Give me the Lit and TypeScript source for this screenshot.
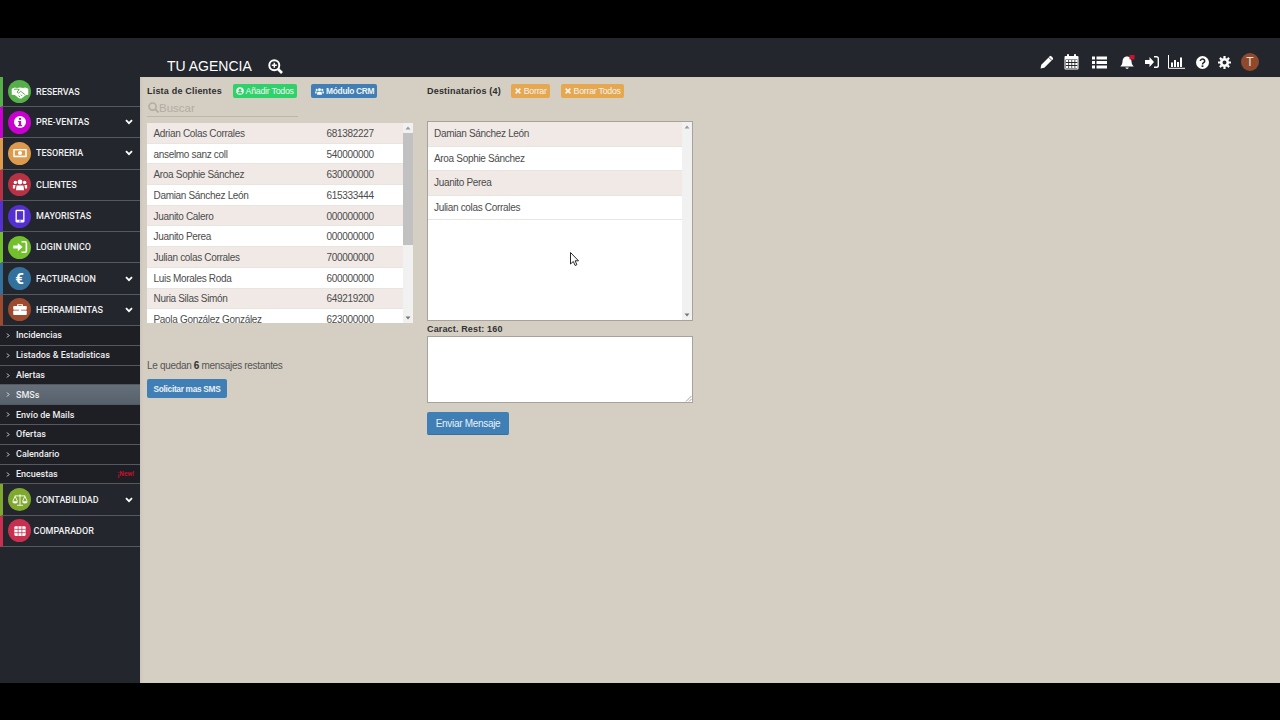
import { LitElement, html, css, svg } from "lit";
import { customElement } from "lit/decorators.js";

const icons: Record<string, unknown> = {
  handshake: svg`<path d="M1 7.500l4-1.500 3 .8L12 6l4 .8L19 6l4 1.500v8L20 16l-6 4.500h-3L5 16l-4-.5z" fill="#fff"/><path d="M4 8.500l4-.5 3 1-3 3 2 1.500 3-2.500 5.500 4.500M10 17l2 1.500M13 15.500l2 2" stroke="#55b04a" stroke-width="1.300" fill="none"/>`,
  info: svg`<circle cx="12" cy="12" r="8" fill="#fff"/><rect x="10.6" y="6.5" width="2.8" height="2.6" fill="#c800d0"/><path d="M9.5 10.5h4V16h1.2v1.6H9.4V16h1.2v-3.8H9.5z" fill="#c800d0"/>`,
  money: svg`<rect x="3" y="6.5" width="18" height="11" rx="1" fill="#fff"/><rect x="5" y="8.5" width="14" height="7" fill="#dd9a4c"/><circle cx="12" cy="12" r="2.8" fill="#fff"/>`,
  users: svg`<circle cx="12" cy="8" r="3.2" fill="#fff"/><circle cx="5.8" cy="8.5" r="2.3" fill="#fff"/><circle cx="18.2" cy="8.5" r="2.3" fill="#fff"/><path d="M7.5 12.5h9l1 6.5h-11z" fill="#fff"/><path d="M2.5 12h3.5l-.7 4.5H2.5zM18 12h3.5v4.5h-2.8z" fill="#fff"/>`,
  tablet: svg`<rect x="6" y="3.5" width="12" height="17" rx="1.5" fill="#fff"/><rect x="7.8" y="5.5" width="8.4" height="11.5" fill="#5530d0"/><circle cx="12" cy="18.8" r="1" fill="#5530d0"/>`,
  signin: svg`<path d="M3 10h6V6.5l6.5 5.5L9 17.5V14H3z" fill="#fff"/><path d="M14 5h4.5A2 2 0 0 1 20.500 7v10a2 2 0 0 1-2 2H14" fill="none" stroke="#fff" stroke-width="2.200"/>`,
  euro: svg``,
  briefcase: svg`<path d="M9 6.500V5h6v1.500" fill="none" stroke="#fff" stroke-width="1.600"/><rect x="3" y="6.500" width="18" height="5" rx="1" fill="#fff"/><rect x="3" y="12.500" width="18" height="6" rx="1" fill="#fff"/><rect x="10.500" y="11" width="3" height="2.500" fill="#fff"/>`,
  balance: svg`<path d="M12 4.500v14M8 19h8M5 6.500h14M5.500 7l-3 6.500M5.500 7l3 6.500M18.500 7l-3 6.500M18.500 7l3 6.500" stroke="#fff" stroke-width="1.200" fill="none"/><path d="M2 13.500h7a3.500 3 0 0 1-7 0zM15 13.500h7a3.500 3 0 0 1-7 0z" fill="#fff"/>`,
  grid: svg`<rect x="4.500" y="5.500" width="15" height="13" rx="1.500" fill="#fff"/><path d="M9.500 5.500v13M14.500 5.500v13M4.500 9.800h15M4.500 14.200h15" stroke="#c9304f" stroke-width="1"/>`,
};

interface MainItem { label: string; color: string; icon: string; chev?: boolean; }
const mainA: MainItem[] = [
  { label: "RESERVAS", color: "#55b04a", icon: "handshake" },
  { label: "PRE-VENTAS", color: "#c800d0", icon: "info", chev: true },
  { label: "TESORERIA", color: "#dd9a4c", icon: "money", chev: true },
  { label: "CLIENTES", color: "#b83246", icon: "users" },
  { label: "MAYORISTAS", color: "#5530d0", icon: "tablet" },
  { label: "LOGIN UNICO", color: "#72c02c", icon: "signin" },
  { label: "FACTURACION", color: "#33709c", icon: "euro", chev: true },
  { label: "HERRAMIENTAS", color: "#9c4b2e", icon: "briefcase", chev: true },
];
const mainB: MainItem[] = [
  { label: "CONTABILIDAD", color: "#7fa82e", icon: "balance", chev: true },
  { label: "COMPARADOR", color: "#c9304f", icon: "grid" },
];
const subs = ["Incidencias", "Listados & Estadísticas", "Alertas", "SMSs", "Envío de Mails", "Ofertas", "Calendario", "Encuestas"];
const clients = [
  ["Adrian Colas Corrales", "681382227"],
  ["anselmo sanz coll", "540000000"],
  ["Aroa Sophie Sánchez", "630000000"],
  ["Damian Sánchez León", "615333444"],
  ["Juanito Calero", "000000000"],
  ["Juanito Perea", "000000000"],
  ["Julian colas Corrales", "700000000"],
  ["Luis Morales Roda", "600000000"],
  ["Nuria Silas Simón", "649219200"],
  ["Paola González González", "623000000"],
];
const dest = ["Damian Sánchez León", "Aroa Sophie Sánchez", "Juanito Perea", "Julian colas Corrales"];

const up = html`<svg class="arrow" viewBox="0 0 10 10"><path d="M2.500 6.500L5 3.500l2.500 3z" fill="#9a9a9a"/></svg>`;
const down = html`<svg class="arrow" viewBox="0 0 10 10"><path d="M2.500 3.500L5 6.500l2.500-3z" fill="#777"/></svg>`;

@customElement("app-root")
export class AppRoot extends LitElement {
  static styles = css`
    :host { display: block; width: 1280px; height: 720px; background: #000; overflow: hidden; position: relative;
      font-family: "Liberation Sans", Arial, sans-serif; color: #3a3a3a; }
    .shell { display: flex; flex-direction: column; height: 720px; padding: 38px 0 37px; box-sizing: border-box; }
    header { height: 39px; flex: none; background: #23262d; display: flex; align-items: flex-end; color: #fff; }
    .brand { margin-left: 167px; font-size: 14px; line-height: 18px; margin-bottom: 2px; color: #fff; }
    .zoom-ic { width: 15px; height: 15px; margin: 0 0 3px 16px; }
    .tools { margin-left: auto; display: flex; align-items: center; align-self: flex-start; margin-top: 15px; padding-right: 21px; }
    .tools svg { display: block; flex: none; }
    .avatar { width: 18px; height: 18px; border-radius: 50%; background: #8f4a2e; color: #f2dfd2; font-size: 12px; line-height: 18px; text-align: center; margin-left: 10px; }
    .main { flex: 1; display: flex; min-height: 0; }
    aside { width: 140px; flex: none; background: #23262d; font-family: Roboto, "Liberation Sans", sans-serif; }
    .mi { display: flex; align-items: center; height: 31.3px; box-sizing: border-box; border-left: 3px solid; border-bottom: 1px solid #55585e; color: #f0f0f0; font-size: 9px; font-weight: 500; position: relative; }
    .mi.first { height: 30px; }
    .circle { width: 23px; height: 23px; border-radius: 50%; margin-left: 5px; flex: none; display: flex; align-items: center; justify-content: center; color: #fff; font-size: 15px; font-weight: bold; }
    .circle svg { width: 18px; height: 18px; display: block; }
    .lbl { margin-left: 5px; white-space: nowrap; flex: 1; }
    .mi.tight .lbl { margin-left: 2.500px; }
    .chev { width: 8px; height: 6px; margin-right: 7px; flex: none; }
    .si { display: flex; align-items: center; height: 19.8px; box-sizing: border-box; background: #1d1f24; border-bottom: 1px solid #55585e; color: #eee; font-size: 9px; font-weight: 500; padding-left: 6px; }
    .si.on { background: linear-gradient(#646f79, #56616b); }
    .si .gt { width: 4px; height: 5px; margin-right: 6px; flex: none; }
    .si .new { margin-left: auto; margin-right: 6px; font-size: 6.500px; color: #c0112b; font-weight: bold; }
    .content { flex: 1; background: #d5cec3; display: grid; grid-template-columns: 266px 266px; column-gap: 14px; align-content: start; padding: 7px 0 0 7px; box-sizing: border-box; box-shadow: inset 3px 0 3px -2px #c8c1b6; }
    .head { display: flex; align-items: center; height: 14px; font-size: 9px; font-weight: bold; color: #2e2e2e; letter-spacing: .2px; white-space: nowrap; }
    .btn { display: inline-flex; align-items: center; justify-content: center; gap: 1.500px; box-sizing: border-box; height: 14px; border-radius: 2px; color: #f2f2f2; font-size: 8.800px; letter-spacing: -.25px; font-weight: normal; white-space: nowrap; }
    .btn svg { width: 8px; height: 8px; flex: none; }
    .green { background: #2fd26a; width: 64px; margin-left: 11px; }
    .blue { background: #3f7fb5; width: 66px; margin-left: 14px; font-weight: bold; font-size: 8.400px; letter-spacing: -.3px; }
    .blue svg { width: 11px; height: 11px; }
    .orange { background: #e6a84f; }
    .b1 { width: 39px; margin-left: 10px; }
    .b2 { width: 63px; margin-left: 11px; }
    .search { display: flex; align-items: center; width: 151px; height: 18px; margin-top: 1px; border-bottom: 1px solid #bdb6ab; color: #b3aca2; font-size: 11.500px; box-sizing: border-box; padding-left: 1px; }
    .search svg { width: 11px; height: 11px; flex: none; }
    .list { display: flex; width: 266px; height: 200px; background: #fff; overflow: hidden; margin-top: 6px; }
    .rows { flex: 1; min-width: 0; overflow: hidden; }
    .row { display: flex; align-items: center; height: 20.700px; box-sizing: border-box; padding: 1px 0 0 6.500px; font-size: 10px; letter-spacing: -.32px; color: #4c4c4c; background: #fff; border-bottom: 1px solid #e8e4e0; white-space: nowrap; flex: none; }
    .row:nth-child(odd) { background: #f0e9e6; }
    .row .name { width: 173px; }
    .sb { width: 10px; flex: none; background: #f1f1f1; display: flex; flex-direction: column; }
    .arrow { width: 10px; height: 10px; flex: none; display: block; }
    .thumb { height: 112px; background: #c1c1c1; flex: none; }
    .grow { flex: 1; }
    .dest { width: 266px; height: 200px; box-sizing: border-box; border: 1px solid #a7a39c; background: #fff; margin-top: 23px; display: flex; overflow: hidden; }
    .dest .row { height: 24.600px; padding: 0 0 0 6px; }
    .caract { font-size: 9px; font-weight: bold; color: #333; height: 15px; line-height: 16px; letter-spacing: .15px; }
    .ta { position: relative; height: 67px; box-sizing: border-box; border: 1px solid #a7a39c; background: #fff; }
    .grip { position: absolute; right: 0; bottom: 0; width: 7px; height: 7px; }
    .cta { display: inline-flex; align-items: center; justify-content: center; background: #3f7fb5; color: #e8f0f6; border-radius: 2px; border-bottom: 1px solid #36709f; box-sizing: border-box; width: 82px; height: 23px; font-size: 10px; letter-spacing: -.3px; margin-top: 9px; }
    .rest { font-size: 10px; letter-spacing: -.32px; color: #555; margin-top: 37px; height: 12px; line-height: 12px; }
    .rest b { color: #333; }
    .sms { display: flex; align-items: center; justify-content: center; background: #3f7fb5; color: #e8f0f6; border-radius: 2px; width: 80px; height: 19px; font-size: 8.300px; letter-spacing: -.3px; font-weight: bold; margin-top: 7px; }
    .cursor { position: absolute; left: 570px; top: 252px; width: 9px; height: 15px; }
    .col { display: flex; flex-direction: column; align-items: flex-start; }
    .col > .full { width: 100%; }
  `;

  private mainItem(m: MainItem, first = false) {
    const cls = `mi ${first ? "first" : ""} ${m.label === "COMPARADOR" ? "tight" : ""}`;
    return html`<div class=${cls} style="border-left-color:${m.color}">
      <span class="circle" style="background:${m.color}">${m.icon === "euro" ? "€" : html`<svg viewBox="0 0 24 24">${icons[m.icon]}</svg>`}</span>
      <span class="lbl">${m.label}</span>
      ${m.chev ? html`<svg class="chev" viewBox="0 0 8 6"><path d="M1 1.200l3 3 3-3" fill="none" stroke="#fff" stroke-width="1.800"/></svg>` : ""}
    </div>`;
  }

  private tools() {
    const w = "#fff";
    return html`<div class="tools">
      <svg width="14" height="14" viewBox="0 0 14 14" style="margin-right:10px"><path d="M0.500 13.500l.8-3.800L9.800 1.200a1 1 0 0 1 1.400 0l1.600 1.600a1 1 0 0 1 0 1.400L4.300 12.700z" fill=${w}/><path d="M8.800 2.400l2.800 2.800" stroke="#23262d" stroke-width=".8"/></svg>
      <svg width="15" height="16" viewBox="0 0 15 16" style="margin-right:13px"><rect x=".5" y="2" width="14" height="13.500" rx="1" fill=${w}/><rect x="3" y="0" width="2" height="4" rx=".8" fill=${w}/><rect x="10" y="0" width="2" height="4" rx=".8" fill=${w}/><path d="M1.500 5.500h12v9h-12z" fill="#23262d"/><path d="M2 6h2.300v2H2zM5.100 6h2.300v2H5.100zM8.200 6h2.300v2H8.200zM11.300 6H13.500v2H11.300zM2 9h2.300v2H2zM5.100 9h2.300v2H5.100zM8.200 9h2.300v2H8.200zM11.300 9H13.500v2H11.300zM2 12h2.300v2H2zM5.100 12h2.300v2H5.100zM8.200 12h2.300v2H8.200zM11.300 12H13.500v2H11.300z" fill=${w}/></svg>
      <svg width="15" height="13" viewBox="0 0 15 13" style="margin-right:13px"><path d="M0 .5h3v3H0zM0 5h3v3H0zM0 9.500h3v3H0zM4.500 .5H15v3H4.500zM4.500 5H15v3H4.500zM4.500 9.500H15v3H4.500z" fill=${w}/></svg>
      <svg width="15" height="15" viewBox="0 0 15 15" style="margin-right:10px"><path d="M7 1.500c3 0 4.300 2.300 4.500 5 .2 2.500 1 3.800 2.300 5H.3c1.300-1.200 2-2.500 2.200-5C2.700 3.800 4 1.500 7 1.500z" fill=${w}/><path d="M5.300 12.500h3.500a1.800 1.800 0 0 1-3.500 0z" fill=${w}/><rect x="9.500" y="0" width="5" height="4.500" rx=".5" fill="#c9142d"/></svg>
      <svg width="14" height="12" viewBox="0 0 14 12" style="margin-right:9px"><path d="M0 4h4.500V1l4.500 5-4.500 5V8H0z" fill=${w}/><path d="M9 .8h2.500A1.800 1.800 0 0 1 13.300 2.600v6.800a1.800 1.800 0 0 1-1.800 1.800H9" fill="none" stroke=${w} stroke-width="1.400"/></svg>
      <svg width="17" height="14" viewBox="0 0 17 14" style="margin-right:11px"><path d="M.5 0v13.300H17" fill="none" stroke=${w} stroke-width="1"/><path d="M3 7.500h2V12H3zM6 5h2v7H6zM9 7h2v5H9zM12 2.500h2V12h-2z" fill=${w}/></svg>
      <svg width="13" height="13" viewBox="0 0 13 13" style="margin-right:9px"><circle cx="6.500" cy="6.500" r="6.500" fill=${w}/><path d="M4.300 5a2.200 2 0 1 1 3.400 1.700c-.8.500-1.200.8-1.200 1.700" fill="none" stroke="#23262d" stroke-width="1.500"/><rect x="5.600" y="9.300" width="1.800" height="1.700" fill="#23262d"/></svg>
      <svg width="13" height="13" viewBox="0 0 13 13"><circle cx="6.500" cy="6.500" r="3.300" fill="none" stroke=${w} stroke-width="2.600"/><path d="M6.500 0v13M0 6.500h13M1.900 1.900l9.200 9.200M11.100 1.900l-9.200 9.200" stroke=${w} stroke-width="2.200" stroke-dasharray="2.200 8.600 2.200 0"/></svg>
      <div class="avatar">T</div>
    </div>`;
  }

  render() {
    return html`<div class="shell">
      <header>
        <span class="brand">TU AGENCIA</span>
        <svg class="zoom-ic" viewBox="0 0 15 15"><circle cx="6.300" cy="6.300" r="5" fill="none" stroke="#fff" stroke-width="2"/><path d="M10 10l4 4" stroke="#fff" stroke-width="2.600"/><path d="M3.800 6.300h5M6.300 3.800v5" stroke="#fff" stroke-width="1.500"/></svg>
        ${this.tools()}
      </header>
      <div class="main">
        <aside>
          ${mainA.map((m, i) => this.mainItem(m, i === 0))}
          ${subs.map((s) => html`<div class="si ${s === "SMSs" ? "on" : ""}">
            <svg class="gt" viewBox="0 0 4 5"><path d="M1 .5l2 2-2 2" fill="none" stroke="#eee" stroke-width=".9"/></svg>${s}
            ${s === "Encuestas" ? html`<span class="new">¡New!</span>` : ""}
          </div>`)}
          ${mainB.map((m) => this.mainItem(m))}
        </aside>
        <section class="content">
          <div class="col">
            <div class="head">Lista de Clientes
              <span class="btn green"><svg viewBox="0 0 10 10"><circle cx="5" cy="5" r="4.800" fill="#f2f2f2"/><circle cx="5" cy="4" r="1.700" fill="#2fd26a"/><path d="M2 8a3 2.500 0 0 1 6 0z" fill="#2fd26a"/></svg>Añadir Todos</span>
              <span class="btn blue"><svg viewBox="0 0 24 24">${icons.users}</svg>Módulo CRM</span>
            </div>
            <div class="search"><svg viewBox="0 0 12 12"><circle cx="5" cy="5" r="3.900" fill="none" stroke="#b3aca2" stroke-width="1.800"/><path d="M8 8l3.500 3.500" stroke="#b3aca2" stroke-width="2"/></svg>Buscar</div>
            <div class="list">
              <div class="rows">${clients.map((c) => html`<div class="row"><span class="name">${c[0]}</span><span>${c[1]}</span></div>`)}</div>
              <div class="sb">${up}<div class="thumb"></div><div class="grow"></div>${down}</div>
            </div>
            <div class="rest">Le quedan <b>6</b> mensajes restantes</div>
            <div class="sms">Solicitar mas SMS</div>
          </div>
          <div class="col">
            <div class="head">Destinatarios (4)
              <span class="btn orange b1"><svg viewBox="0 0 10 10"><path d="M2 2l6 6M8 2l-6 6" stroke="#f2f2f2" stroke-width="2"/></svg>Borrar</span>
              <span class="btn orange b2"><svg viewBox="0 0 10 10"><path d="M2 2l6 6M8 2l-6 6" stroke="#f2f2f2" stroke-width="2"/></svg>Borrar Todos</span>
            </div>
            <div class="dest full">
              <div class="rows">${dest.map((d) => html`<div class="row">${d}</div>`)}</div>
              <div class="sb">${up}<div class="grow"></div>${down}</div>
            </div>
            <div class="caract">Caract. Rest: 160</div>
            <div class="ta full"><svg class="grip" viewBox="0 0 7 7"><path d="M1 6.500L6.500 1M4 6.500L6.500 4" stroke="#777" stroke-width=".7"/></svg></div>
            <div class="cta">Enviar Mensaje</div>
          </div>
        </section>
      </div>
    </div>
    <svg class="cursor" viewBox="0 0 9 15"><path d="M.5 .5v11.500l2.800-2.500 1.800 4 1.800-.8-1.800-3.900H8.500z" fill="#fff" stroke="#111" stroke-width=".9"/></svg>`;
  }
}
